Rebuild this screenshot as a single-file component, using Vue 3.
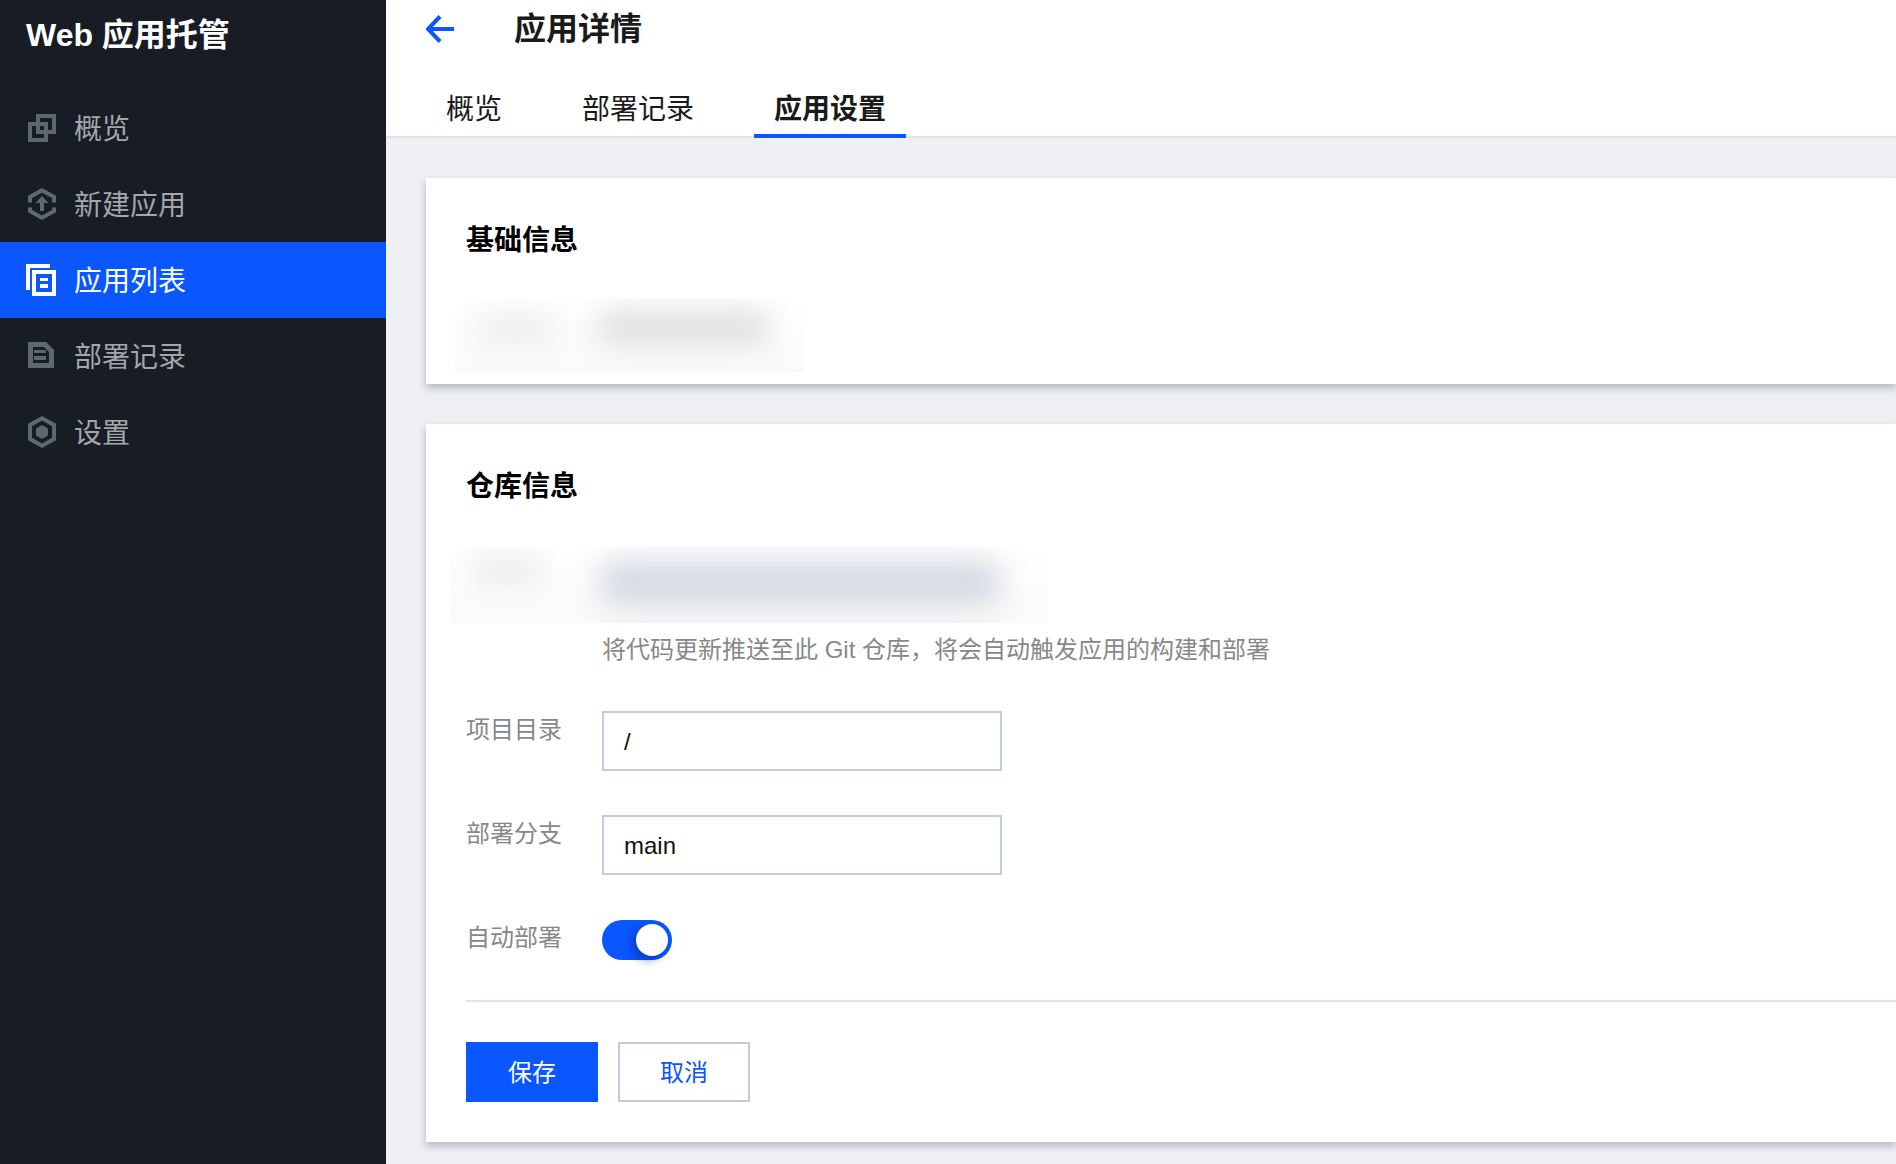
<template>
  <div class="layout">
    <aside class="sidebar">
      <div class="logo">Web 应用托管</div>
      <nav>
        <a
          v-for="item in navItems"
          :key="item.id"
          class="nav-item"
          :class="{ active: item.id === 'list' }"
        >
          <svg class="nav-icon" width="32" height="32" viewBox="0 0 32 32">
            <template v-if="item.id === 'overview'">
              <rect x="12" y="4" width="16" height="16" class="line" />
              <rect x="4" y="12" width="16" height="16" class="line" />
            </template>
            <template v-else-if="item.id === 'create'">
              <path d="M4 14.5V9L16 2.3 28 9v5.5M4 19.5V23l12 6.7L28 23v-3.5" class="line" />
              <path d="M16 8l6.5 7H18v8h-4v-8H9.500z" class="solid" />
            </template>
            <template v-else-if="item.id === 'list'">
              <path d="M0 0h24v4H4v22H0z" class="solid" />
              <rect x="8" y="8" width="20" height="22" class="line" />
              <path d="M14 14h8v3h-8zM14 20h8v4h-8z" class="solid" />
            </template>
            <template v-else-if="item.id === 'records'">
              <path d="M4.500 4.500h14.500l6.500 6.500v14.500h-21z" class="line thick" />
              <path d="M8 10h12v3H8zM8 16h12v4H8z" class="solid" />
            </template>
            <template v-else>
              <path d="M16 2.300L28 9v14l-12 6.700L4 23V9z" class="line" />
              <path d="M16 9l6 3.500v7L16 23l-6-3.500v-7z" class="solid" />
            </template>
          </svg>
          <span>{{ item.name }}</span>
        </a>
      </nav>
    </aside>

    <main class="main">
      <header class="page-header">
        <div class="title-row">
          <svg class="back" width="28" height="28" viewBox="0 0 28 28">
            <path d="M28 14H3M14 1.500L2 14l12 12.500" />
          </svg>
          <h1>应用详情</h1>
        </div>
        <div class="tabs">
          <div
            v-for="tab in tabs"
            :key="tab"
            class="tab"
            :class="{ current: tab === activeTab }"
            @click="activeTab = tab"
          >
            {{ tab }}
          </div>
        </div>
      </header>

      <div class="content">
        <section class="card card-basic">
          <h2>基础信息</h2>
          <div class="redacted basic-blur">
            <i class="smear label-smear"></i>
            <i class="smear value-smear"></i>
          </div>
        </section>

        <section class="card card-repo">
          <h2>仓库信息</h2>
          <div class="redacted repo-blur">
            <i class="smear label-smear"></i>
            <i class="smear value-smear"></i>
          </div>
          <p class="hint">将代码更新推送至此 Git 仓库，将会自动触发应用的构建和部署</p>

          <div class="field first">
            <label>项目目录</label>
            <input v-model="directory" />
          </div>
          <div class="field">
            <label>部署分支</label>
            <input v-model="branch" />
          </div>
          <div class="field switch-field">
            <label>自动部署</label>
            <div class="switch" :class="{ on: autoDeploy }" @click="autoDeploy = !autoDeploy">
              <span class="knob"></span>
            </div>
          </div>

          <div class="actions">
            <button class="btn primary">保存</button>
            <button class="btn">取消</button>
          </div>
        </section>
      </div>
    </main>
  </div>
</template>

<script setup>
import { ref } from "vue";

const navItems = [
  { id: "overview", name: "概览" },
  { id: "create", name: "新建应用" },
  { id: "list", name: "应用列表" },
  { id: "records", name: "部署记录" },
  { id: "settings", name: "设置" },
];

const tabs = ["概览", "部署记录", "应用设置"];
const activeTab = ref("应用设置");

const directory = ref("/");
const branch = ref("main");
const autoDeploy = ref(true);
</script>

<style>
html,
body {
  margin: 0;
  background: #eef0f4;
}
</style>

<style scoped>
.layout {
  display: flex;
  height: 1164px;
  overflow: hidden;
  font-family: "Liberation Sans", "Noto Sans CJK SC", sans-serif;
}

.sidebar {
  flex: 0 0 386px;
  background: #181c25;
}
.logo {
  height: 90px;
  padding: 15px 0 0 26px;
  box-sizing: border-box;
  font-size: 32px;
  line-height: 40px;
  font-weight: 700;
  color: #fff;
}
.nav-item {
  display: flex;
  align-items: center;
  gap: 16px;
  height: 76px;
  padding-left: 26px;
  font-size: 28px;
  color: #a3a6aa;
}
.nav-item span {
  margin-top: -2px;
}
.nav-item.active {
  background: #0a56ff;
  color: #fff;
}
.nav-icon .line {
  fill: none;
  stroke: #5d6870;
  stroke-width: 4;
}
.nav-icon .thick {
  stroke-width: 5;
}
.nav-icon .solid {
  fill: #5d6870;
}
.active .nav-icon .line {
  stroke: #fff;
}
.active .nav-icon .solid {
  fill: #fff;
}

.main {
  flex: 1;
  min-width: 0;
  background: #eef0f4;
}
.page-header {
  height: 138px;
  padding-left: 40px;
  box-sizing: border-box;
  background: #fff;
  box-shadow: inset 0 -2px 0 #dfe3ea;
}
.title-row {
  display: flex;
  align-items: center;
  height: 58px;
  margin-bottom: 20px;
}
.back {
  margin-right: 60px;
}
.back path {
  fill: none;
  stroke: #0a56ff;
  stroke-width: 4;
}
h1 {
  margin: 0;
  font-size: 32px;
  line-height: 44px;
  font-weight: 700;
  color: #1a1a1a;
}
.tabs {
  display: flex;
  gap: 40px;
}
.tab {
  padding: 4px 20px 0;
  font-size: 28px;
  line-height: 56px;
  color: #1a1a1a;
  cursor: pointer;
}
.tab.current {
  font-weight: 700;
  box-shadow: inset 0 -4px 0 #0a56ff;
}

.content {
  padding: 40px 0 0 40px;
}
.card {
  margin-bottom: 40px;
  padding: 41px 0 0 40px;
  background: #fff;
  box-shadow: 0 4px 8px rgba(54, 58, 80, 0.32);
}
.card h2 {
  margin: 0;
  font-size: 28px;
  line-height: 44px;
  font-weight: 700;
  color: #000;
}
.card-basic {
  height: 206px;
  box-sizing: border-box;
}

/* blurred-out values from the original screenshot */
.redacted {
  position: relative;
  overflow: hidden;
  background: linear-gradient(#fff, #fafafa);
}
.basic-blur {
  width: 349px;
  height: 74px;
  margin: 35px 0 0 -11px;
}
.repo-blur {
  width: 598px;
  height: 76px;
  margin: 38px 0 0 -16px;
}
.smear {
  position: absolute;
  filter: blur(15px);
  border-radius: 12px;
}
.basic-blur .label-smear {
  left: 20px;
  top: 18px;
  width: 82px;
  height: 26px;
  background: #eaeaea;
}
.basic-blur .value-smear {
  left: 142px;
  top: 14px;
  width: 172px;
  height: 32px;
  background: #dcdcdc;
}
.repo-blur .label-smear {
  left: 20px;
  top: 8px;
  width: 72px;
  height: 30px;
  background: #ebebeb;
}
.repo-blur .value-smear {
  left: 150px;
  top: 12px;
  width: 400px;
  height: 48px;
  background: #d6dae2;
}

.hint {
  margin: 9px 0 0 136px;
  font-size: 24px;
  line-height: 36px;
  color: #888;
}
.field {
  display: flex;
  align-items: flex-start;
  margin-top: 44px;
}
.field.first {
  margin-top: 43px;
}
.field label {
  flex: 0 0 136px;
  margin-top: 1px;
  font-size: 24px;
  line-height: 36px;
  color: #888;
}
.field input {
  width: 400px;
  height: 60px;
  padding: 2px 20px 0;
  box-sizing: border-box;
  border: 2px solid #c4cbda;
  border-radius: 0;
  outline: none;
  font-family: inherit;
  font-size: 24px;
  color: #111;
}
.switch-field {
  margin-top: 45px;
}
.switch-field label {
  margin-top: 0;
}
.switch {
  position: relative;
  width: 70px;
  height: 40px;
  border-radius: 20px;
  background: #c4cbda;
  cursor: pointer;
}
.switch.on {
  background: #0a56ff;
}
.knob {
  position: absolute;
  top: 4px;
  left: 4px;
  width: 32px;
  height: 32px;
  border-radius: 50%;
  background: #fff;
}
.switch.on .knob {
  left: 34px;
  box-shadow: -4px 4px 8px rgba(0, 30, 120, 0.45);
}

.actions {
  display: flex;
  gap: 20px;
  margin-top: 40px;
  padding: 40px 0;
  border-top: 2px solid #e0e4ea;
}
.btn {
  width: 132px;
  height: 60px;
  padding: 0 0 4px;
  box-sizing: border-box;
  border: 2px solid #c4cbda;
  background: #fff;
  font-family: inherit;
  font-size: 24px;
  color: #0a56ff;
  cursor: pointer;
}
.btn.primary {
  border: none;
  background: #0a56ff;
  color: #fff;
}
</style>
